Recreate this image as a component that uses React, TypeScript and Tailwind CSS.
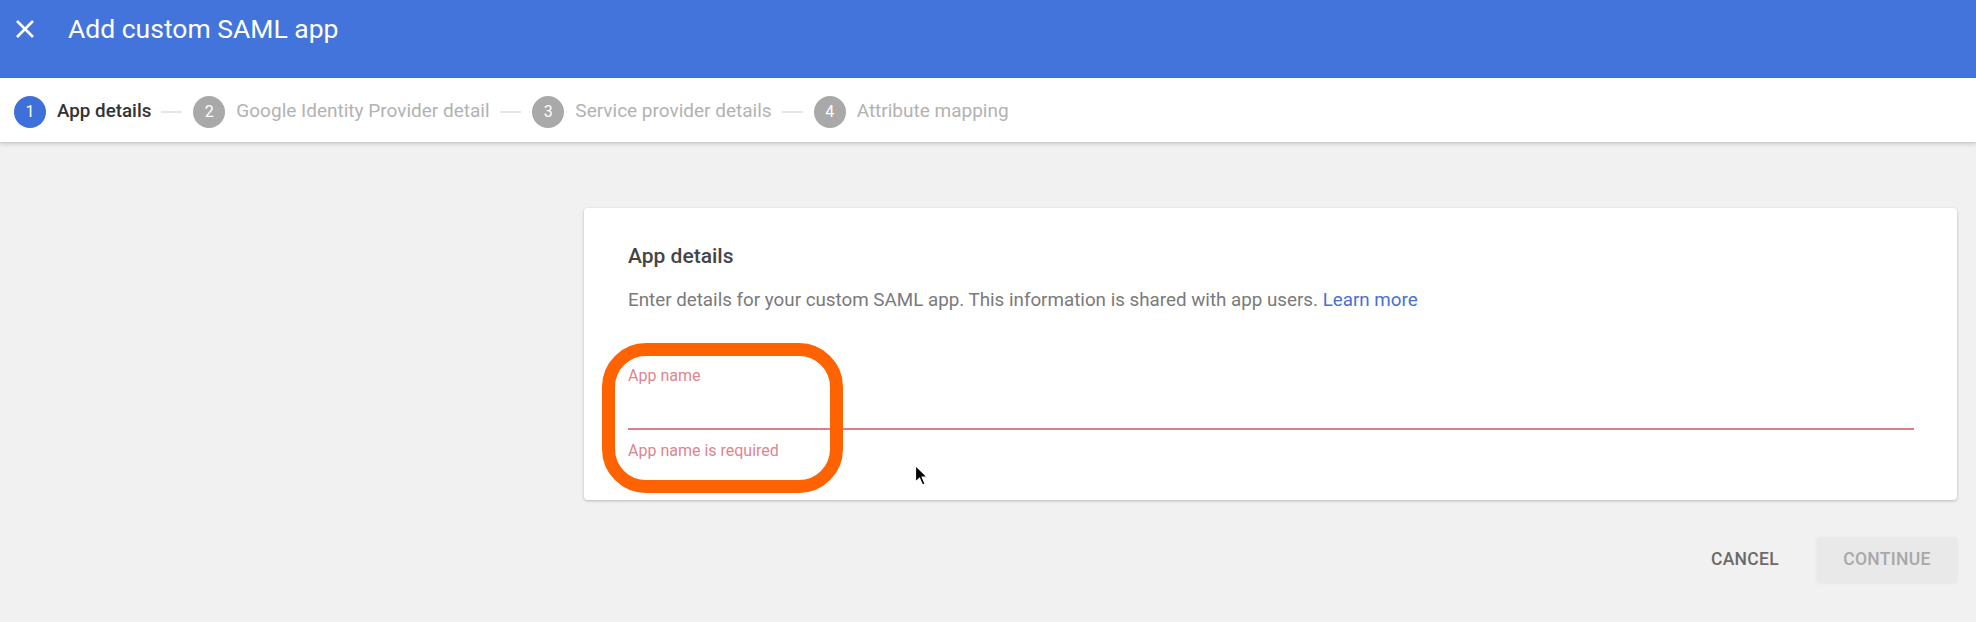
import React from "react";

const steps = [
  { n: 1, label: "App details", active: true, w: "" },
  { n: 2, label: "Google Identity Provider details", active: false, w: "w-[254px]" },
  { n: 3, label: "Service provider details", active: false, w: "" },
  { n: 4, label: "Attribute mapping", active: false, w: "" },
];

export default function App() {
  return (
    <div className="relative w-[1976px] h-[622px] overflow-hidden bg-[#f1f1f1] font-['Roboto','Liberation_Sans',sans-serif]">
      <header className="h-[78px] bg-[#4374db]">
        <div className="flex h-[58px] items-center">
          <div className="flex w-[68px] items-center pl-[15px]">
            <svg width="20" height="20" viewBox="0 0 20 20" fill="none">
              <path d="M2 2 L18 18 M18 2 L2 18" stroke="white" strokeWidth="2.6" />
            </svg>
          </div>
          <h1 className="text-[26.5px] leading-none text-white">Add custom SAML app</h1>
        </div>
      </header>

      <nav className="relative z-10 flex h-[64px] items-center bg-white pl-[14px] pt-[3px] shadow-[0_2px_4px_rgba(0,0,0,0.18)]">
        {steps.map((s, i) => (
          <div key={s.n} className="flex items-center">
            {i > 0 && <div className="ml-[10px] mr-[11px] h-[2px] w-[21px] bg-[#e6e6e6]" />}
            <div
              className={
                "flex h-[32px] w-[32px] items-center justify-center rounded-full text-[16px] text-white " +
                (s.active ? "bg-[#3e70da]" : "bg-[#a9a9a9]")
              }
            >
              {s.n}
            </div>
            <span
              className={
                "ml-[11px] overflow-hidden whitespace-nowrap " +
                (s.active ? "text-[18.8px] font-medium text-[#333333]" : "text-[19px] text-[#b2b2b2] ") +
                s.w
              }
            >
              {s.label}
            </span>
          </div>
        ))}
      </nav>

      <main className="flex pt-[66px]">
        <div className="w-[584px] shrink-0" />
        <div className="flex-1 pr-[19px]">
          <section className="h-[292px] rounded-[4px] bg-white pl-[44px] pr-[43px] pt-[34px] shadow-[0_1px_3px_rgba(0,0,0,0.25)]">
            <h2 className="text-[21px] font-medium leading-[28px] text-[#454545]">App details</h2>
            <p className="mt-[18px] text-[18.8px] leading-[24px] text-[#7a7a7a]">
              Enter details for your custom SAML app. This information is shared with app users.{" "}
              <span className="text-[#4a70d4]">Learn more</span>
            </p>
            <div className="mt-[55px]">
              <div className="text-[16px] leading-[18px] text-[#de8590]">App name</div>
              <div className="h-[45px] border-b-2 border-[#dd7f87]" />
              <div className="mt-[12px] text-[16px] leading-[18px] text-[#de8590]">App name is required</div>
            </div>
          </section>

          <div className="mt-[37px] flex items-center justify-end">
            <button className="px-[24px] text-[17.5px] font-medium tracking-[0.3px] text-[#6a6a6a]">CANCEL</button>
            <button className="ml-[14px] flex h-[45px] w-[140px] items-center justify-center rounded-[3px] bg-[#e9e9e9] text-[17.5px] font-medium tracking-[0.3px] text-[#a8a8a8] shadow-[0_1px_4px_rgba(0,0,0,0.06)]">
              CONTINUE
            </button>
          </div>
        </div>
      </main>

      <div className="absolute left-[602px] top-[343px] h-[150px] w-[241px] rounded-[44px] border-[13px] border-[#ff6200]" />

      <svg className="absolute left-[914px] top-[464px]" width="16" height="24" viewBox="0 0 16 24">
        <path d="M1.5 1.5 L1.5 18 L5.5 14.2 L8.5 21 L11 19.8 L8.2 13.2 L13.5 13.2 Z" fill="black" stroke="white" strokeWidth="1.2" />
      </svg>
    </div>
  );
}
